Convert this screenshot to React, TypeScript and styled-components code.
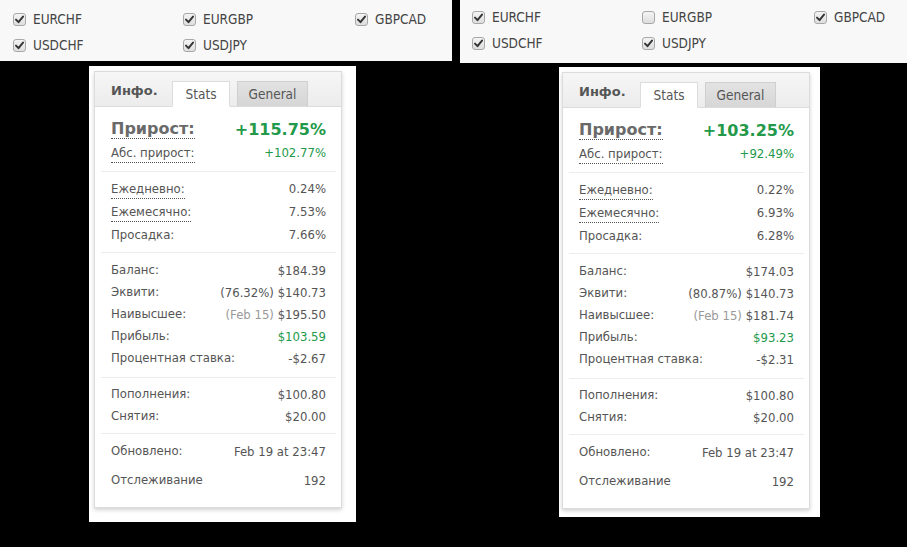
import React from 'react'
import styled, { createGlobalStyle } from 'styled-components'

interface Pair {
    name: string
    checked: boolean
}

interface StatRow {
    label: string
    value: string
    note?: string
    noteMuted?: boolean
    dotted?: boolean
    green?: boolean
}

interface AccountStats {
    gain: string
    absGain: string
    performance: StatRow[]
    balance: StatRow[]
    cash: StatRow[]
    updated: string
    tracking: string
}

const GlobalStyle = createGlobalStyle`
    html, body {
        margin: 0;
        padding: 0;
        background: #000;
    }
    body {
        font-family: 'DejaVu Sans Condensed', 'DejaVu Sans', Tahoma, sans-serif;
        font-size: 13px;
        color: #555;
    }
`

const leftPairs: Pair[] = [
    { name: 'EURCHF', checked: true },
    { name: 'EURGBP', checked: true },
    { name: 'GBPCAD', checked: true },
    { name: 'USDCHF', checked: true },
    { name: 'USDJPY', checked: true },
]

const rightPairs: Pair[] = [
    { name: 'EURCHF', checked: true },
    { name: 'EURGBP', checked: false },
    { name: 'GBPCAD', checked: true },
    { name: 'USDCHF', checked: true },
    { name: 'USDJPY', checked: true },
]

const leftStats: AccountStats = {
    gain: '+115.75%',
    absGain: '+102.77%',
    performance: [
        { label: 'Ежедневно:', value: '0.24%', dotted: true },
        { label: 'Ежемесячно:', value: '7.53%', dotted: true },
        { label: 'Просадка:', value: '7.66%' },
    ],
    balance: [
        { label: 'Баланс:', value: '$184.39' },
        { label: 'Эквити:', value: '$140.73', note: '(76.32%)' },
        { label: 'Наивысшее:', value: '$195.50', note: '(Feb 15)', noteMuted: true },
        { label: 'Прибыль:', value: '$103.59', green: true },
        { label: 'Процентная ставка:', value: '-$2.67' },
    ],
    cash: [
        { label: 'Пополнения:', value: '$100.80' },
        { label: 'Снятия:', value: '$20.00' },
    ],
    updated: 'Feb 19 at 23:47',
    tracking: '192',
}

const rightStats: AccountStats = {
    gain: '+103.25%',
    absGain: '+92.49%',
    performance: [
        { label: 'Ежедневно:', value: '0.22%', dotted: true },
        { label: 'Ежемесячно:', value: '6.93%', dotted: true },
        { label: 'Просадка:', value: '6.28%' },
    ],
    balance: [
        { label: 'Баланс:', value: '$174.03' },
        { label: 'Эквити:', value: '$140.73', note: '(80.87%)' },
        { label: 'Наивысшее:', value: '$181.74', note: '(Feb 15)', noteMuted: true },
        { label: 'Прибыль:', value: '$93.23', green: true },
        { label: 'Процентная ставка:', value: '-$2.31' },
    ],
    cash: [
        { label: 'Пополнения:', value: '$100.80' },
        { label: 'Снятия:', value: '$20.00' },
    ],
    updated: 'Feb 19 at 23:47',
    tracking: '192',
}

const CheckBox: React.FC<{ checked: boolean }> = ({ checked }) => (
    <Box>
        {checked && (
            <svg width="9" height="9" viewBox="0 0 9 9">
                <path d="M1 4.6 L3.5 7.2 L8 1.6" fill="none" stroke="#333" strokeWidth="1.9" strokeLinecap="round" strokeLinejoin="round" />
            </svg>
        )}
    </Box>
)

const PairFilter: React.FC<{ pairs: Pair[]; height: number; padTop: number; offset: number }> = ({ pairs, height, padTop, offset }) => (
    <FilterBar $height={height} $padTop={padTop} $offset={offset}>
        {pairs.map(p => (
            <PairItem key={p.name}>
                <CheckBox checked={p.checked} />
                <PairName>{p.name}</PairName>
            </PairItem>
        ))}
    </FilterBar>
)

const Row: React.FC<{ row: StatRow; tall?: boolean }> = ({ row, tall }) => (
    <StatLine $tall={tall}>
        <Label $dotted={row.dotted}>{row.label}</Label>
        <Value $green={row.green}>
            {row.note && <Note $muted={row.noteMuted}>{row.note} </Note>}
            {row.value}
        </Value>
    </StatLine>
)

const StatsCard: React.FC<{ stats: AccountStats }> = ({ stats }) => (
    <Card>
        <TabBar>
            <InfoTitle>Инфо.</InfoTitle>
            <Tab $active $width={58}>Stats</Tab>
            <Tab $width={71}>General</Tab>
        </TabBar>
        <CardBody>
            <Section $top={11} $bottom={7} $first>
                <StatLine $tall>
                    <GainLabel>Прирост:</GainLabel>
                    <GainValue>{stats.gain}</GainValue>
                </StatLine>
                <StatLine $tall>
                    <Label $dotted>Абс. прирост:</Label>
                    <Value $green>{stats.absGain}</Value>
                </StatLine>
            </Section>
            <Section $top={5} $bottom={6}>
                {stats.performance.map(r => (
                    <Row key={r.label} row={r} tall />
                ))}
            </Section>
            <Section $top={6} $bottom={8}>
                {stats.balance.map(r => (
                    <Row key={r.label} row={r} />
                ))}
            </Section>
            <Section $top={5} $bottom={6}>
                {stats.cash.map(r => (
                    <Row key={r.label} row={r} />
                ))}
            </Section>
            <Section $top={6} $bottom={16}>
                <Row row={{ label: 'Обновлено:', value: stats.updated }} />
                <TrackingLine>
                    <Label>Отслеживание</Label>
                    <Value>{stats.tracking}</Value>
                </TrackingLine>
            </Section>
        </CardBody>
    </Card>
)

const App: React.FC = () => {
    return (
        <>
            <GlobalStyle />
            <Page>
                <Pane $width={452}>
                    <PairFilter pairs={leftPairs} height={61} padTop={6} offset={13} />
                    <CardFrame $left={89} $top={5} $width={267} $height={456} $pad={5}>
                        <StatsCard stats={leftStats} />
                    </CardFrame>
                </Pane>
                <Pane $width={447}>
                    <PairFilter pairs={rightPairs} height={63} padTop={4} offset={12} />
                    <CardFrame $left={99} $top={4} $width={261} $height={450} $pad={3}>
                        <StatsCard stats={rightStats} />
                    </CardFrame>
                </Pane>
            </Page>
        </>
    )
}

export default App

const Page = styled.div`
    display: flex;
    gap: 8px;
    width: 907px;
    height: 547px;
    background: #000;
    overflow: hidden;
`

const Pane = styled.div<{ $width: number }>`
    display: flex;
    flex-direction: column;
    width: ${p => p.$width}px;
    flex-shrink: 0;
`

const FilterBar = styled.div<{ $height: number; $padTop: number; $offset: number }>`
    display: grid;
    grid-template-columns: 170px 172px 1fr;
    grid-auto-rows: 26px;
    align-content: start;
    height: ${p => p.$height}px;
    box-sizing: border-box;
    padding: ${p => p.$padTop}px 0 0 ${p => p.$offset}px;
    background: #f8f8f8;
`

const PairItem = styled.label`
    display: flex;
    align-items: center;
    gap: 7px;
`

const Box = styled.span`
    display: inline-flex;
    align-items: center;
    justify-content: center;
    width: 13px;
    height: 13px;
    box-sizing: border-box;
    border: 1px solid #a8a8a8;
    border-radius: 3px;
    background: linear-gradient(#f4f4f4, #dedede);
`

const PairName = styled.span`
    font-size: 13.5px;
    color: #444;
`

const CardFrame = styled.div<{ $left: number; $top: number; $width: number; $height: number; $pad: number }>`
    margin: ${p => p.$top}px 0 0 ${p => p.$left}px;
    width: ${p => p.$width}px;
    height: ${p => p.$height}px;
    background: #fff;
    padding: 5px 0 0 ${p => p.$pad}px;
    box-sizing: border-box;
`

const Card = styled.div`
    width: 248px;
    box-sizing: border-box;
    border: 1px solid #dcdcdc;
    background: #fff;
    box-shadow: 0 2px 4px rgba(0, 0, 0, 0.18);
`

const TabBar = styled.div`
    display: flex;
    align-items: flex-end;
    height: 34px;
    padding-left: 16px;
    background: linear-gradient(#f6f6f6, #ececec);
    border-bottom: 1px solid #dcdcdc;
`

const InfoTitle = styled.span`
    align-self: center;
    margin-top: 3px;
    width: 61px;
    font-family: 'DejaVu Sans', Tahoma, sans-serif;
    font-weight: bold;
    font-size: 13px;
    color: #555;
`

const Tab = styled.span<{ $active?: boolean; $width: number }>`
    display: flex;
    align-items: center;
    justify-content: center;
    box-sizing: border-box;
    width: ${p => p.$width}px;
    height: 26px;
    margin-right: 7px;
    margin-bottom: -1px;
    font-size: 13.5px;
    color: #555;
    border: 1px solid ${p => (p.$active ? '#dcdcdc' : '#cfcfcf')};
    border-bottom: ${p => (p.$active ? '1px solid #fff' : '1px solid #dcdcdc')};
    background: ${p => (p.$active ? '#fff' : 'linear-gradient(#e2e2e2, #d6d6d6)')};
`

const CardBody = styled.div`
    padding: 0 5px 0 6px;
`

const Section = styled.div<{ $first?: boolean; $top: number; $bottom: number }>`
    padding: ${p => p.$top}px 10px ${p => p.$bottom}px 10px;
    border-top: ${p => (p.$first ? 'none' : '1px solid #ececec')};
`

const StatLine = styled.div<{ $tall?: boolean }>`
    display: flex;
    justify-content: space-between;
    align-items: center;
    height: ${p => (p.$tall ? 23 : 22)}px;
`

const TrackingLine = styled(StatLine)`
    margin-top: 7px;
`

const Label = styled.span<{ $dotted?: boolean }>`
    font-size: 13px;
    color: #555;
    line-height: 16px;
    padding-bottom: ${p => (p.$dotted ? '1px' : '0')};
    border-bottom: ${p => (p.$dotted ? '1px dotted #555' : 'none')};
    margin-bottom: ${p => (p.$dotted ? '-2px' : '0')};
`

const Value = styled.span<{ $green?: boolean }>`
    font-size: 13px;
    color: ${p => (p.$green ? '#23994a' : '#555')};
`

const Note = styled.span<{ $muted?: boolean }>`
    color: ${p => (p.$muted ? '#999' : '#555')};
`

const GainLabel = styled.span`
    font-family: 'DejaVu Sans', Tahoma, sans-serif;
    font-weight: bold;
    font-size: 16px;
    color: #6a6a6a;
    line-height: 18px;
    border-bottom: 1px dotted #555;
`

const GainValue = styled.span`
    font-family: 'DejaVu Sans', Tahoma, sans-serif;
    font-weight: bold;
    font-size: 16px;
    color: #23994a;
`
